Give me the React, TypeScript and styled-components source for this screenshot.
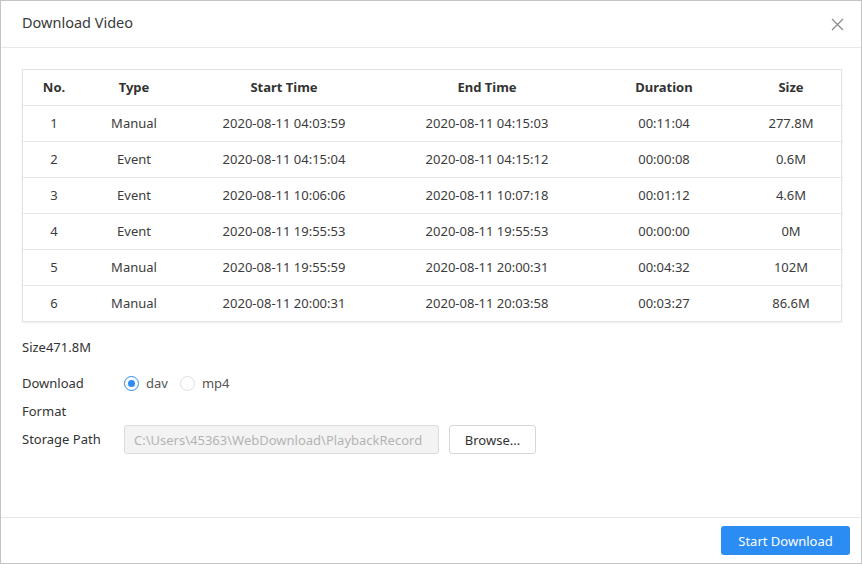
import React from "react";
import styled, { createGlobalStyle } from "styled-components";

const Global = createGlobalStyle`
  html, body { margin: 0; padding: 0; background: #fff; }
  body { font-family: "Noto Sans", "Open Sans", sans-serif; color: #333; }
  * { box-sizing: border-box; }
`;

const Dialog = styled.div`
  width: 862px;
  height: 564px;
  border: 1px solid #c4c4c4;
  background: #fff;
  display: flex;
  flex-direction: column;
`;

const Header = styled.div`
  height: 47px;
  flex: none;
  border-bottom: 1px solid #e8e8e8;
  display: flex;
  align-items: center;
  justify-content: space-between;
  padding: 0 14px 0 21px;
`;

const Title = styled.div`
  font-size: 14.5px;
  color: #3a3a3a;
  margin-top: -4px;
`;

const Close = styled.button`
  border: none;
  background: none;
  padding: 0;
  width: 20px;
  height: 20px;
  display: flex;
  align-items: center;
  justify-content: center;
  cursor: pointer;
`;

const Body = styled.div`
  flex: 1;
  padding: 21px 19px 0 21px;
  display: flex;
  flex-direction: column;
`;

const TableWrap = styled.div`
  border: 1px solid #e3e3e3;
  box-shadow: 0 1px 2px rgba(0, 0, 0, 0.08);
`;

const Table = styled.table`
  width: 100%;
  border-collapse: collapse;
  table-layout: fixed;
  font-size: 13px;
`;

const Th = styled.th<{ $w: number }>`
  width: ${(p) => p.$w}px;
  height: 35px;
  font-weight: 700;
  color: #333;
  text-align: center;
  padding: 0;
  border-bottom: 1px solid #e8e8e8;
`;

const Td = styled.td`
  height: 36px;
  text-align: center;
  padding: 0;
  color: #3c3c3c;
`;

const Tr = styled.tr<{ $last: boolean }>`
  td {
    border-bottom: ${(p) => (p.$last ? "none" : "1px solid #e8e8e8")};
  }
`;

const Total = styled.div`
  font-size: 13px;
  color: #333;
  margin-top: 16px;
`;

const Form = styled.div`
  margin-top: 13px;
  display: grid;
  grid-template-columns: 102px 1fr;
  font-size: 13px;
`;

const Label = styled.div`
  line-height: 28px;
  color: #333;
`;

const FormatLabel = styled.div`
  line-height: 28px;
  color: #333;
  grid-column: 1;
`;

const Radios = styled.div`
  display: flex;
  align-items: center;
  gap: 12px;
  height: 28px;
`;

const RadioItem = styled.label`
  display: flex;
  align-items: center;
  gap: 7px;
  color: #555;
  font-size: 13px;
`;

const RadioCircle = styled.span<{ $on: boolean }>`
  width: 15px;
  height: 15px;
  border-radius: 50%;
  border: 1px solid ${(p) => (p.$on ? "#2d8cf0" : "#dcdee2")};
  display: flex;
  align-items: center;
  justify-content: center;
  &::after {
    content: "";
    width: 7px;
    height: 7px;
    border-radius: 50%;
    background: ${(p) => (p.$on ? "#2d8cf0" : "transparent")};
  }
`;

const PathRow = styled.div`
  display: flex;
  align-items: center;
  gap: 10px;
`;

const PathInput = styled.div`
  width: 315px;
  height: 29px;
  border: 1px solid #dcdcdc;
  background: #f3f3f3;
  border-radius: 3px;
  color: #b3b3b3;
  font-size: 13px;
  padding: 0 9px;
  display: flex;
  align-items: center;
  white-space: nowrap;
  overflow: hidden;
`;

const BrowseBtn = styled.button`
  width: 87px;
  height: 29px;
  border: 1px solid #d6d6d6;
  border-radius: 3px;
  background: #fff;
  color: #333;
  font-family: inherit;
  font-size: 13px;
  padding: 0;
`;

const Footer = styled.div`
  height: 46px;
  flex: none;
  border-top: 1px solid #e8e8e8;
  display: flex;
  align-items: center;
  justify-content: flex-end;
  padding: 0 11px 0 0;
`;

const PrimaryBtn = styled.button`
  width: 129px;
  height: 29px;
  border: none;
  border-radius: 3px;
  background: #2b8cf3;
  color: #fff;
  font-family: inherit;
  font-size: 13px;
  padding: 0;
`;

const cols = [
  { title: "No.", w: 62 },
  { title: "Type", w: 98 },
  { title: "Start Time", w: 202 },
  { title: "End Time", w: 204 },
  { title: "Duration", w: 150 },
  { title: "Size", w: 104 },
];

const rows = [
  ["1", "Manual", "2020-08-11 04:03:59", "2020-08-11 04:15:03", "00:11:04", "277.8M"],
  ["2", "Event", "2020-08-11 04:15:04", "2020-08-11 04:15:12", "00:00:08", "0.6M"],
  ["3", "Event", "2020-08-11 10:06:06", "2020-08-11 10:07:18", "00:01:12", "4.6M"],
  ["4", "Event", "2020-08-11 19:55:53", "2020-08-11 19:55:53", "00:00:00", "0M"],
  ["5", "Manual", "2020-08-11 19:55:59", "2020-08-11 20:00:31", "00:04:32", "102M"],
  ["6", "Manual", "2020-08-11 20:00:31", "2020-08-11 20:03:58", "00:03:27", "86.6M"],
];

export default function App() {
  return (
    <>
      <Global />
      <Dialog>
        <Header>
          <Title>Download Video</Title>
          <Close aria-label="close">
            <svg width="13" height="13" viewBox="0 0 13 13">
              <path d="M1 1L12 12M12 1L1 12" stroke="#8a8a8a" strokeWidth="1.2" fill="none" />
            </svg>
          </Close>
        </Header>
        <Body>
          <TableWrap>
            <Table>
              <thead>
                <tr>
                  {cols.map((c) => (
                    <Th key={c.title} $w={c.w}>
                      {c.title}
                    </Th>
                  ))}
                </tr>
              </thead>
              <tbody>
                {rows.map((r, i) => (
                  <Tr key={i} $last={i === rows.length - 1}>
                    {r.map((v, j) => (
                      <Td key={j}>{v}</Td>
                    ))}
                  </Tr>
                ))}
              </tbody>
            </Table>
          </TableWrap>
          <Total>Size471.8M</Total>
          <Form>
            <Label>Download</Label>
            <Radios>
              <RadioItem>
                <RadioCircle $on={true} />
                dav
              </RadioItem>
              <RadioItem>
                <RadioCircle $on={false} />
                mp4
              </RadioItem>
            </Radios>
            <FormatLabel>Format</FormatLabel>
            <div />
            <Label>Storage Path</Label>
            <PathRow>
              <PathInput>C:\Users\45363\WebDownload\PlaybackRecord</PathInput>
              <BrowseBtn>Browse...</BrowseBtn>
            </PathRow>
          </Form>
        </Body>
        <Footer>
          <PrimaryBtn>Start Download</PrimaryBtn>
        </Footer>
      </Dialog>
    </>
  );
}
